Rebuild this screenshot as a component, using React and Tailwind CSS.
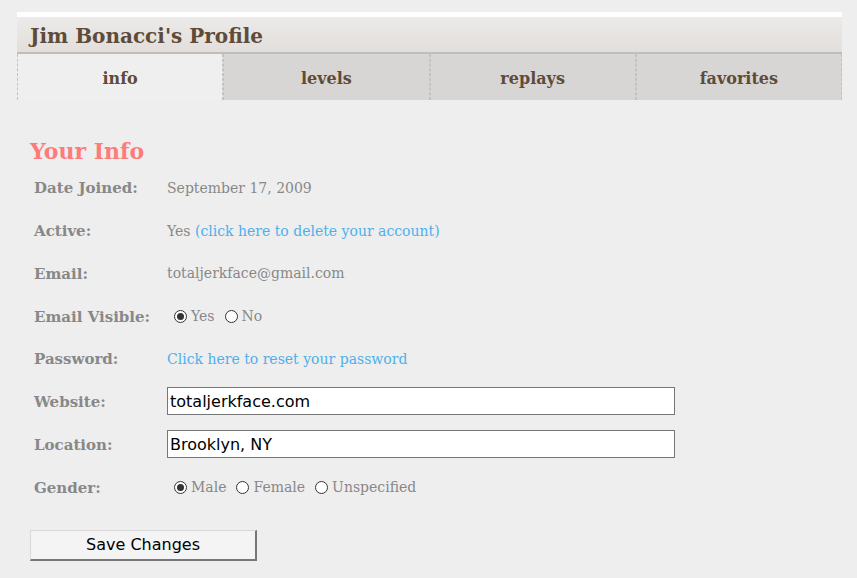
import React, { useState } from 'react';

const serif = "font-['Georgia','DejaVu_Serif',serif]";
const sans = "font-['DejaVu_Sans','Liberation_Sans',sans-serif]";

const tabs = ['info', 'levels', 'replays', 'favorites'];

const Radio = ({ checked, label, onClick }) => (
  <label className="flex items-center mr-[10px] cursor-pointer" onClick={onClick}>
    <span className="w-[13px] h-[13px] rounded-full border border-[#333] bg-white flex items-center justify-center mr-[4px]">
      {checked && <span className="w-[7px] h-[7px] rounded-full bg-[#333]" />}
    </span>
    <span>{label}</span>
  </label>
);

const Row = ({ label, children }) => (
  <div className="flex items-center h-[42.8px]">
    <div className="w-[137px] pl-[4px] font-bold text-[15px]">{label}</div>
    <div className="flex-1 flex items-center">{children}</div>
  </div>
);

const App = () => {
  const [tab, setTab] = useState('info');
  const [visible, setVisible] = useState('yes');
  const [gender, setGender] = useState('male');
  const [website, setWebsite] = useState('totaljerkface.com');
  const [location, setLocation] = useState('Brooklyn, NY');

  return (
    <div className={`min-h-[578px] bg-[#eeeeee] pt-[12px] px-[17px] ${serif}`}>
      <div className="w-[825px]">
        <div className="h-[5px] bg-white" />
        <div className="h-[37px] bg-gradient-to-b from-[#ecebea] to-[#e2dedb] border-b-2 border-[#c0bebc] flex items-center pl-[13px] pt-[3px]">
          <h1 className="text-[20px] font-bold text-[#5e4b38]">Jim Bonacci's Profile</h1>
        </div>
        <div className="flex h-[46px]">
          {tabs.map((t) => (
            <button
              key={t}
              onClick={() => setTab(t)}
              className={`flex-1 border-x border-dashed border-[#c4c2c0] text-[16px] font-bold text-[#5e4b38] pt-[3px] ${
                tab === t ? 'bg-[#efefef]' : 'bg-[#d8d6d4]'
              }`}
            >
              {t}
            </button>
          ))}
        </div>

        <div className="pt-[37px] pl-[13px] text-[14px] text-[#888888]">
          <h2 className="text-[22px] font-bold text-[#ff7b7b] leading-[28px] mb-[2px]">Your Info</h2>
          <Row label="Date Joined:">September 17, 2009</Row>
          <Row label="Active:">
            <span>
              Yes <a href="#" className="text-[#4db0ec]">(click here to delete your account)</a>
            </span>
          </Row>
          <Row label="Email:">totaljerkface@gmail.com</Row>
          <Row label="Email Visible:">
            <div className="flex items-center pl-[7px]">
              <Radio checked={visible === 'yes'} label="Yes" onClick={() => setVisible('yes')} />
              <Radio checked={visible === 'no'} label="No" onClick={() => setVisible('no')} />
            </div>
          </Row>
          <Row label="Password:">
            <a href="#" className="text-[#4db0ec]">Click here to reset your password</a>
          </Row>
          <Row label="Website:">
            <input
              value={website}
              onChange={(e) => setWebsite(e.target.value)}
              className={`w-[508px] h-[28px] -mt-[2px] bg-white border border-[#767676] px-[2px] text-[16px] text-black outline-none ${sans}`}
            />
          </Row>
          <Row label="Location:">
            <input
              value={location}
              onChange={(e) => setLocation(e.target.value)}
              className={`w-[508px] h-[28px] -mt-[2px] bg-white border border-[#767676] px-[2px] text-[16px] text-black outline-none ${sans}`}
            />
          </Row>
          <Row label="Gender:">
            <div className="flex items-center pl-[7px]">
              <Radio checked={gender === 'male'} label="Male" onClick={() => setGender('male')} />
              <Radio checked={gender === 'female'} label="Female" onClick={() => setGender('female')} />
              <Radio checked={gender === 'unspecified'} label="Unspecified" onClick={() => setGender('unspecified')} />
            </div>
          </Row>
          <div className="pt-[21px]">
            <button
              className={`w-[227px] h-[31px] bg-[#f4f4f4] border border-[#d8d8d8] border-r-2 border-b-2 border-r-[#777] border-b-[#777] text-[16px] text-black ${sans}`}
            >
              Save Changes
            </button>
          </div>
        </div>
      </div>
    </div>
  );
};

export default App;
